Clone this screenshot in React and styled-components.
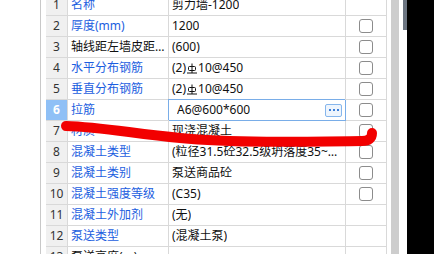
import React from "react";
import styled, { createGlobalStyle, css } from "styled-components";

const Global = createGlobalStyle`
  html, body { margin: 0; padding: 0; background: #fff; overflow: hidden; }
  body { font-family: "Noto Sans", "Noto Sans CJK SC", sans-serif; }
`;

const Page = styled.div`
  position: relative;
  display: flex;
  width: 434px;
  height: 254px;
  overflow: hidden;
  background: #fff;
`;

const Gutter = styled.div`
  width: 40px;
  flex: none;
  border-right: 1px solid #c8c8c8;
  margin-right: 5px;
`;

const Table = styled.div`
  flex: none;
  display: grid;
  grid-template-columns: 22px 101px 177px 41px;
  grid-auto-rows: 21px;
  margin-top: -5px;
  align-self: flex-start;
  font-size: 12px;
`;

const Cell = styled.div`
  box-sizing: border-box;
  border-right: 1px solid #d9d9d9;
  border-bottom: 1px solid #d9d9d9;
  display: flex;
  align-items: center;
  min-width: 0;
  overflow: hidden;
  white-space: nowrap;
  line-height: 14px;
`;

const NumCell = styled(Cell)`
  justify-content: center;
  background: ${(p) => (p.$sel ? "#8fc0f6" : "#f0f0f0")};
  color: ${(p) => (p.$sel ? "#fff" : "#333")};
  font-weight: ${(p) => (p.$sel ? 700 : 400)};
  font-family: "Noto Sans", sans-serif;
`;

const NameCell = styled(Cell)`
  padding-left: 3px;
  color: ${(p) => (p.$plain ? "#111" : "#1c5ee0")};
`;

const Clip = styled.span`
  overflow: hidden;
  text-overflow: ellipsis;
  white-space: nowrap;
  min-width: 0;
`;

const ValueCell = styled(Cell)`
  padding-left: 3px;
  padding-right: 3px;
  color: #111;
  ${(p) =>
    p.$editing &&
    css`
      border-right-color: #79ade8;
      border-bottom-color: #79ade8;
      box-shadow: -1px -1px 0 0 #79ade8;
      padding-left: 8px;
      justify-content: space-between;
    `}
`;

const CheckCell = styled(Cell)`
  justify-content: center;
`;

const Box = styled.span`
  box-sizing: border-box;
  width: 14px;
  height: 14px;
  border: 1px solid #8c8c8c;
  border-radius: 3px;
  background: #fff;
  margin-left: -1px;
`;

const DotsButton = styled.span`
  box-sizing: border-box;
  width: 17px;
  height: 13px;
  border: 1px solid #86b6ec;
  border-radius: 2px;
  background: #eef5fd;
  display: flex;
  align-items: center;
  justify-content: center;
  gap: 2px;
  margin-right: 0px;
`;

const Dot = styled.span`
  width: 2px;
  height: 2px;
  background: #3d7fd8;
`;

const Scroll = styled.div`
  display: flex;
  flex: 1;
  padding-left: 4px;
`;

const Track = styled.div`
  width: 8px;
  background: #cdcdcd;
  margin-right: 4px;
`;

const Thin = styled.div`
  width: 4px;
  position: relative;
  background: linear-gradient(#6c7581 0 30px, #fff 30px);
`;

const Dark = styled.div`
  flex: 1;
  background: #000;
`;

const Stroke = styled.svg`
  position: absolute;
  left: 0;
  top: 0;
  pointer-events: none;
`;

const Rebar = () => (
  <svg width="10" height="11" viewBox="0 0 10 11" style={{ margin: "0 1px 0 1px" }}>
    <g stroke="#111" strokeWidth="1" fill="none">
      <line x1="5" y1="0.5" x2="5" y2="10" />
      <rect x="1.5" y="3.5" width="7" height="4" rx="1" />
      <line x1="0" y1="10" x2="10" y2="10" />
    </g>
  </svg>
);

const rows = [
  { n: 1, name: "名称", value: "剪力墙-1200", cb: false },
  { n: 2, name: "厚度(mm)", value: "1200", cb: true },
  { n: 3, name: "轴线距左墙皮距离(mm)", value: "(600)", cb: true, plain: true },
  { n: 4, name: "水平分布钢筋", rebar: true, cb: true },
  { n: 5, name: "垂直分布钢筋", rebar: true, cb: true },
  { n: 6, name: "拉筋", value: "A6@600*600", cb: true, sel: true },
  { n: 7, name: "材质", value: "现浇混凝土", cb: true },
  { n: 8, name: "混凝土类型", value: "(粒径31.5砼32.5级坍落度35~50mm)", cb: true },
  { n: 9, name: "混凝土类别", value: "泵送商品砼", cb: true },
  { n: 10, name: "混凝土强度等级", value: "(C35)", cb: true },
  { n: 11, name: "混凝土外加剂", value: "(无)", cb: false },
  { n: 12, name: "泵送类型", value: "(混凝土泵)", cb: false },
  { n: 13, name: "泵送高度(m)", value: "", cb: false, plain: true },
];

export default function App() {
  return (
    <>
      <Global />
      <Page>
        <Gutter />
        <Table>
          {rows.map((r) => (
            <React.Fragment key={r.n}>
              <NumCell $sel={r.sel}>{r.n}</NumCell>
              <NameCell $plain={r.plain}>
                <Clip>{r.name}</Clip>
              </NameCell>
              <ValueCell $editing={r.sel}>
                {r.rebar ? (
                  <>
                    (2)
                    <Rebar />
                    10@450
                  </>
                ) : (
                  <Clip>{r.value}</Clip>
                )}
                {r.sel && (
                  <DotsButton>
                    <Dot />
                    <Dot />
                    <Dot />
                  </DotsButton>
                )}
              </ValueCell>
              <CheckCell>{r.cb && <Box />}</CheckCell>
            </React.Fragment>
          ))}
        </Table>
        <Scroll>
          <Track />
          <Thin />
          <Dark />
        </Scroll>
        <Stroke width="434" height="254" viewBox="0 0 434 254">
          <path
            d="M66 126 C 100 127, 130 133, 180 138 C 230 143, 300 142, 362 141 C 369 141, 372 138, 372 133"
            stroke="#f20000"
            strokeWidth="10"
            strokeLinecap="round"
            fill="none"
          />
        </Stroke>
      </Page>
    </>
  );
}
